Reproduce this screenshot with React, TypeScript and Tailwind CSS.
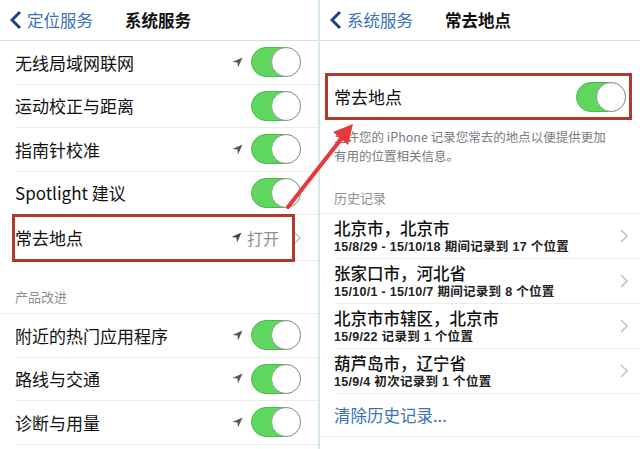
import React from 'react';

const FONT = { fontFamily: '"Noto Sans CJK SC", "Noto Sans", sans-serif' };
const SUB_FONT = { fontFamily: '"Liberation Sans", "Noto Sans CJK SC", sans-serif' };

function Toggle() {
  return (
    <div className="relative h-[30px] w-[50px] shrink-0 rounded-full border border-[#4cb84c] bg-[#5fd75f]">
      <div className="absolute right-[-1px] top-[-1px] h-[30px] w-[30px] rounded-full border border-[#8a9a8a] bg-white" />
    </div>
  );
}

function LocArrow({ color = '#555' }: { color?: string }) {
  return (
    <svg width="11" height="11" viewBox="0 0 12 12" className="shrink-0">
      <polygon points="11.5,0.5 0.5,5.5 6,6 6.5,11.5" fill={color} />
    </svg>
  );
}

function Chevron() {
  return (
    <svg width="8" height="14" viewBox="0 0 8 14" className="shrink-0">
      <polyline points="1,1 7,7 1,13" fill="none" stroke="#c4c4c8" strokeWidth="1.6" />
    </svg>
  );
}

function NavBar({ back, title }: { back: string; title: string }) {
  return (
    <div className="flex h-[41px] items-center border-b border-[#dcdcdc] pl-[10px]">
      <svg width="12" height="20" viewBox="0 0 12 20" className="shrink-0">
        <polyline points="10,2 2,10 10,18" fill="none" stroke="#1e3f8a" strokeWidth="3" />
      </svg>
      <span className="ml-[5px] text-[16.5px] text-[#3a72b8]">{back}</span>
      <span className="ml-[32px] text-[16.5px] font-bold text-[#111]">{title}</span>
    </div>
  );
}

function ToggleRow({ label, arrow }: { label: string; arrow?: boolean }) {
  return (
    <div className="ml-[15px] flex h-[43.5px] items-center border-b border-[#ededed] pr-[17px]">
      <span className="flex-1 text-[17px] text-[#111]">{label}</span>
      {arrow && <div className="mr-[8px]"><LocArrow /></div>}
      <Toggle />
    </div>
  );
}

const history = [
  { title: '北京市，北京市', sub: '15/8/29 - 15/10/18 期间记录到 17 个位置' },
  { title: '张家口市，河北省', sub: '15/10/1 - 15/10/7 期间记录到 8 个位置' },
  { title: '北京市市辖区，北京市', sub: '15/9/22 记录到 1 个位置' },
  { title: '葫芦岛市，辽宁省', sub: '15/9/4 初次记录到 1 个位置' },
];

export default function App() {
  return (
    <div className="relative flex h-[449px] w-[640px] overflow-hidden bg-white" style={FONT}>
      {/* Left: 系统服务 */}
      <div className="w-[320px] shrink-0 border-r-2 border-[#d6e8ee]">
        <NavBar back="定位服务" title="系统服务" />
        <ToggleRow label="无线局域网联网" arrow />
        <ToggleRow label="运动校正与距离" />
        <ToggleRow label="指南针校准" arrow />
        <ToggleRow label="Spotlight 建议" />
        <div className="relative ml-[15px] flex h-[46px] items-center border-b border-[#ededed] pr-[17px]">
          <span className="flex-1 text-[17px] text-[#111]">常去地点</span>
          <LocArrow color="#444" />
          <span className="ml-[5px] mr-[14px] text-[16px] text-[#8e8e93]">打开</span>
          <Chevron />
          <div className="absolute left-[-3px] top-[-1px] h-[48px] w-[283px] border-[3px] border-[#b23a2c]" />
        </div>
        <div className="flex h-[53px] items-end border-b border-[#ededed] pb-[7px] pl-[15px]">
          <span className="text-[13px] text-[#8e8e93]">产品改进</span>
        </div>
        <ToggleRow label="附近的热门应用程序" arrow />
        <ToggleRow label="路线与交通" arrow />
        <ToggleRow label="诊断与用量" arrow />
      </div>

      {/* Right: 常去地点 */}
      <div className="flex-1">
        <NavBar back="系统服务" title="常去地点" />
        <div className="h-[34px]" />
        <div className="relative flex h-[44px] items-center pl-[14px] pr-[14px]">
          <span className="flex-1 text-[17px] text-[#111]">常去地点</span>
          <Toggle />
          <div className="absolute left-[5px] right-[8px] top-[-2px] h-[47px] border-[3px] border-[#b23a2c]" />
        </div>
        <p className="pl-[14px] pr-[22px] pt-[8px] text-[12.5px] leading-[19px] text-[#7a7a7f]">
          允许您的 iPhone 记录您常去的地点以便提供更加有用的位置相关信息。
        </p>
        <div className="flex h-[49px] items-end border-b border-[#ededed] pb-[6px] pl-[14px]">
          <span className="text-[13px] text-[#8e8e93]">历史记录</span>
        </div>
        {history.map((h) => (
          <div key={h.title} className="ml-[14px] flex h-[45px] items-center border-b border-[#ededed] pr-[12px]">
            <div className="flex flex-1 flex-col">
              <span className="text-[16.5px] font-medium leading-[21px] text-[#111]">{h.title}</span>
              <span
                className="mt-[1px] text-[12.5px] font-bold leading-[15px] tracking-[0.3px] text-[#222]"
                style={SUB_FONT}
              >
                {h.sub}
              </span>
            </div>
            <Chevron />
          </div>
        ))}
        <div className="flex h-[43px] items-center border-b border-[#ededed] pl-[14px]">
          <span className="text-[16.5px] text-[#3a72b8]">清除历史记录...</span>
        </div>
      </div>

      {/* Red annotation arrow */}
      <svg className="pointer-events-none absolute left-0 top-0" width="640" height="449">
        <line x1="288" y1="207" x2="342" y2="138" stroke="#e8393a" strokeWidth="4" strokeLinecap="round" />
        <polygon points="353,124 333,132 348,145" fill="#e8393a" />
      </svg>
    </div>
  );
}
